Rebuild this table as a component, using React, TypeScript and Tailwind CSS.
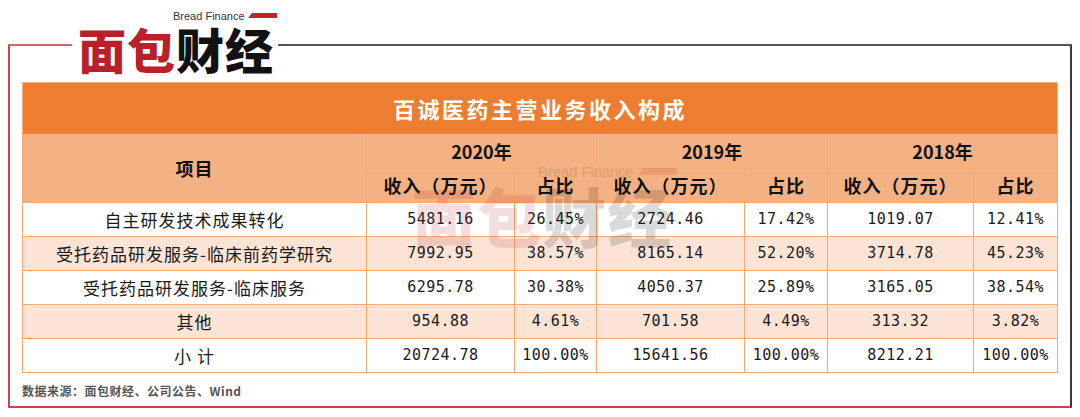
import React from "react";

const cjk = { fontFamily: '"Noto Sans CJK SC", "Noto Sans", sans-serif' };
const mono = { fontFamily: '"DejaVu Sans Mono", "Noto Sans CJK SC", monospace' };

type Row = {
  label: string;
  cells: string[];
};

const rows: Row[] = [
  { label: "自主研发技术成果转化", cells: ["5481.16", "26.45%", "2724.46", "17.42%", "1019.07", "12.41%"] },
  { label: "受托药品研发服务-临床前药学研究", cells: ["7992.95", "38.57%", "8165.14", "52.20%", "3714.78", "45.23%"] },
  { label: "受托药品研发服务-临床服务", cells: ["6295.78", "30.38%", "4050.37", "25.89%", "3165.05", "38.54%"] },
  { label: "其他", cells: ["954.88", "4.61%", "701.58", "4.49%", "313.32", "3.82%"] },
  { label: "小 计", cells: ["20724.78", "100.00%", "15641.56", "100.00%", "8212.21", "100.00%"] },
];

function Logo() {
  return (
    <div className="w-[200px]">
      <div className="flex h-[12px] items-center pl-[95px]">
        <span
          className="text-[11px] leading-none text-[#333]"
          style={{ fontFamily: '"Liberation Sans", Arial, sans-serif' }}
        >
          Bread Finance
        </span>
        <svg width="29" height="6" viewBox="0 0 29 6" className="ml-[3px]">
          <polygon points="4,0 29,0 29,5 0,5" fill="#c0242c" />
        </svg>
      </div>
      <div
        className="mt-[1px] flex h-[50px] items-center text-[48px] font-black leading-none tracking-[1px]"
        style={cjk}
      >
        <span className="text-[#b8202a]">面包</span>
        <span className="text-[#111]">财经</span>
      </div>
    </div>
  );
}

export default function App() {
  const border = "border border-[#f4a974]";
  return (
    <div className="relative h-[417px] w-[1080px] overflow-hidden bg-white" style={cjk}>
      <div className="pl-[8px] pt-[44px]">
        <div className="w-[1064px]">
          {/* top edge of the frame */}
          <div className="flex h-[2px]">
            <div className="w-[64px] bg-[#d0646b]" />
            <div className="w-[206px]" />
            <div className="flex-1 bg-[#555]" />
          </div>
          <div className="h-[362px] border-b-2 border-l-2 border-r-2 border-b-[#c9414b] border-l-[#c9414b] border-r-[#3a3a3a] pl-[12px] pt-[36px]">
            <table className="w-[1035px] table-fixed border-collapse text-center">
              <colgroup>
                <col className="w-[344px]" />
                <col className="w-[148px]" />
                <col className="w-[82px]" />
                <col className="w-[148px]" />
                <col className="w-[83px]" />
                <col className="w-[146px]" />
                <col className="w-[84px]" />
              </colgroup>
              <thead>
                <tr className="h-[52px] bg-[#ed7d31]">
                  <th
                    colSpan={7}
                    className="border border-[#f4b083] text-[22px] font-bold tracking-[2.5px] text-white"
                  >
                    百诚医药主营业务收入构成
                  </th>
                </tr>
                <tr className="h-[34px] bg-[#f4b183] text-[18px] font-bold text-[#111]">
                  <th rowSpan={2} className={`${border} tracking-[1px]`}>
                    项目
                  </th>
                  <th colSpan={2} className={border}>2020年</th>
                  <th colSpan={2} className={border}>2019年</th>
                  <th colSpan={2} className={border}>2018年</th>
                </tr>
                <tr className="h-[34px] bg-[#f4b183] text-[18px] font-bold tracking-[1px] text-[#111]">
                  <th className={border}>收入（万元）</th>
                  <th className={border}>占比</th>
                  <th className={border}>收入（万元）</th>
                  <th className={border}>占比</th>
                  <th className={border}>收入（万元）</th>
                  <th className={border}>占比</th>
                </tr>
              </thead>
              <tbody>
                {rows.map((r, i) => (
                  <tr key={r.label} className={`h-[34px] ${i % 2 === 1 ? "bg-[#fbe4d5]" : "bg-white"}`}>
                    <td className={`${border} text-[17px] tracking-[1px] text-[#1a1a1a]`}>{r.label}</td>
                    {r.cells.map((c, j) => (
                      <td
                        key={j}
                        className={`${border} text-[15px] tracking-[0.5px] text-[#1a1a1a]`}
                        style={mono}
                      >
                        {c}
                      </td>
                    ))}
                  </tr>
                ))}
              </tbody>
            </table>
            <div className="mt-[9px] text-[12px] font-bold leading-[17px] tracking-[0.5px] text-[#555]">
              数据来源：面包财经、公司公告、Wind
            </div>
          </div>
        </div>
      </div>

      {/* logo sits over the frame's top edge */}
      <div className="absolute left-[78px] top-[10px] bg-white">
        <Logo />
      </div>

      {/* faint watermark over the table */}
      <div className="pointer-events-none absolute left-[412px] top-[164px] origin-top-left scale-[1.33] opacity-15">
        <Logo />
      </div>
    </div>
  );
}
